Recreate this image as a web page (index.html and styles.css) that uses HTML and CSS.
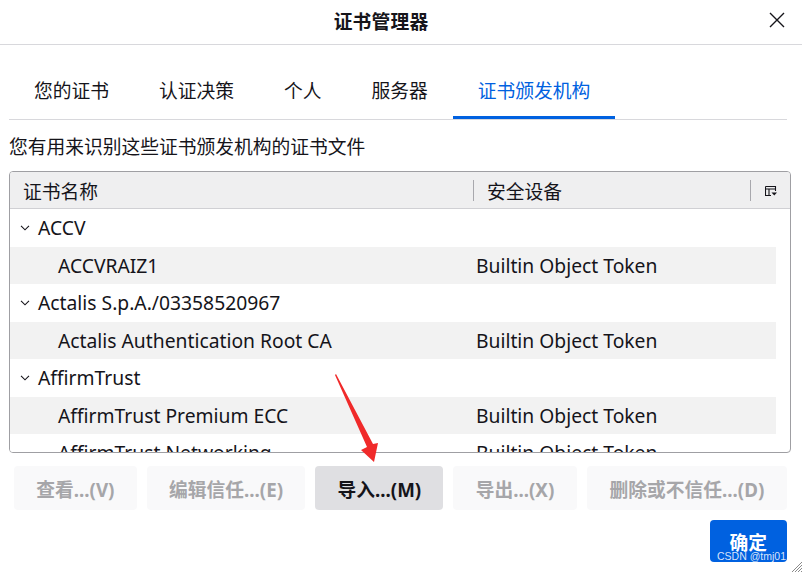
FILE: index.html
```html
<!DOCTYPE html>
<html lang="zh-CN">
<head>
<meta charset="utf-8">
<title>证书管理器</title>
<link rel="stylesheet" href="styles.css">
</head>
<body>
<div class="dialog">
  <header class="titlebar">
    <h1 class="title">证书管理器</h1>
    <button class="close" aria-label="关闭">
      <svg width="16" height="16" viewBox="0 0 16 16"><path d="M1 1 L15 15 M15 1 L1 15" stroke="#15141a" stroke-width="1.4" fill="none"/></svg>
    </button>
  </header>

  <nav class="tabs">
    <div class="tab">您的证书</div>
    <div class="tab">认证决策</div>
    <div class="tab">个人</div>
    <div class="tab">服务器</div>
    <div class="tab active">证书颁发机构</div>
  </nav>

  <p class="desc">您有用来识别这些证书颁发机构的证书文件</p>

  <div class="tree">
    <div class="tree-head">
      <div class="hcell c1">证书名称</div>
      <div class="hsep"></div>
      <div class="hcell c2">安全设备</div>
      <div class="hsep"></div>
      <div class="picker">
        <svg width="12" height="12" viewBox="0 0 12 12">
          <path d="M0.5 1.5 H10.5 V6 M0.5 1.5 V10.5 H6 M0.5 4 H10.5 M4 4 V10.5" stroke="#15141a" stroke-width="1.1" fill="none"/>
          <path d="M6.5 7.5 H12 L9.25 10.5 Z" fill="#15141a"/>
        </svg>
      </div>
    </div>
    <div class="tree-body">
      <div class="row group"><span class="twisty"><svg width="10" height="6" viewBox="0 0 10 6"><path d="M1 0.8 L5 4.8 L9 0.8" stroke="#15141a" stroke-width="1.1" fill="none"/></svg></span><span class="name">ACCV</span></div>
      <div class="row child"><span class="name">ACCVRAIZ1</span><span class="dev">Builtin Object Token</span></div>
      <div class="row group"><span class="twisty"><svg width="10" height="6" viewBox="0 0 10 6"><path d="M1 0.8 L5 4.8 L9 0.8" stroke="#15141a" stroke-width="1.1" fill="none"/></svg></span><span class="name">Actalis S.p.A./03358520967</span></div>
      <div class="row child"><span class="name">Actalis Authentication Root CA</span><span class="dev">Builtin Object Token</span></div>
      <div class="row group"><span class="twisty"><svg width="10" height="6" viewBox="0 0 10 6"><path d="M1 0.8 L5 4.8 L9 0.8" stroke="#15141a" stroke-width="1.1" fill="none"/></svg></span><span class="name">AffirmTrust</span></div>
      <div class="row child"><span class="name">AffirmTrust Premium ECC</span><span class="dev">Builtin Object Token</span></div>
      <div class="row child plain"><span class="name">AffirmTrust Networking</span><span class="dev">Builtin Object Token</span></div>
    </div>
  </div>

  <div class="actions">
    <button class="btn disabled">查看...(V)</button>
    <button class="btn disabled">编辑信任...(E)</button>
    <button class="btn normal">导入...(M)</button>
    <button class="btn disabled">导出...(X)</button>
    <button class="btn disabled wide">删除或不信任...(D)</button>
  </div>

  <div class="footer">
    <button class="btn primary">确定</button>
  </div>

  <svg class="arrow" width="802" height="572" viewBox="0 0 802 572">
    <polygon points="336,374 373,444 378,443 374,462 361,450 367,447 335,375" fill="#f02a2a"/>
  </svg>
  <div class="watermark">CSDN @tmj01</div>
  <svg class="grip" width="12" height="12" viewBox="0 0 12 12">
    <path d="M12 2 L2 12 M12 5 L5 12 M12 8 L8 12 M12 11 L11 12" stroke="#8a8a8a" stroke-width="1" fill="none"/>
  </svg>
</div>
</body>
</html>
```

FILE: styles.css
```css
* { box-sizing: border-box; }
html, body {
  margin: 0;
  padding: 0;
  background: #ffffff;
}
body {
  width: 802px;
  height: 572px;
  overflow: hidden;
  font-family: "Noto Sans", "Noto Sans CJK SC", sans-serif;
  font-size: 18.75px;
  color: #15141a;
}
.dialog {
  position: relative;
  width: 802px;
  height: 572px;
}
.titlebar {
  height: 45px;
  border-bottom: 1px solid #d8d8dc;
  display: flex;
  align-items: center;
  justify-content: center;
  padding-right: 40px;
  position: relative;
}
.title {
  margin: 0;
  font-size: 18.75px;
  font-weight: 700;
  line-height: 24px;
  letter-spacing: 0.2px;
}
.close {
  position: absolute;
  right: 17px;
  top: 12px;
  width: 16px;
  height: 16px;
  padding: 0;
  border: 0;
  background: none;
  display: block;
}
.close svg { display: block; }
.tabs {
  display: flex;
  margin: 21px 15px 0 9px;
  border-bottom: 1px solid #d8d8dc;
}
.tab {
  padding: 0 25px;
  height: 53px;
  line-height: 50px;
  border-bottom: 3px solid transparent;
  white-space: nowrap;
}
.tab.active {
  color: #0061e0;
  border-bottom-color: #0061e0;
}
.desc {
  margin: 15px 0 0 9px;
  line-height: 24px;
}
.tree {
  margin: 12px 0 0 9px;
  width: 782px;
  height: 282px;
  border: 1px solid #9f9fa3;
  border-radius: 4px;
  overflow: hidden;
}
.tree-head {
  display: flex;
  align-items: center;
  height: 37px;
  background: #efeff0;
  border-bottom: 1px solid #d0d0d4;
}
.hcell {
  white-space: nowrap;
}
.hcell.c1 {
  width: 463px;
  padding-left: 13px;
}
.hcell.c2 {
  width: 276px;
  padding-left: 13px;
}
.hsep {
  width: 1px;
  height: 21px;
  background: #a8a8ad;
}
.picker {
  flex: 1;
  display: flex;
  justify-content: center;
  padding-top: 2px;
}
.picker svg { display: block; }
.tree-body {
  width: 766px;
  font-size: 19.3px;
}
.row {
  height: 37.5px;
  display: flex;
  align-items: center;
  white-space: nowrap;
}
.row.child {
  background: #f2f2f2;
}
.row.child.plain {
  background: #ffffff;
}
.twisty {
  width: 28px;
  padding-left: 10px;
  display: flex;
  align-items: center;
}
.twisty svg { display: block; }
.row.group .name { width: 435px; }
.row.child .name {
  width: 466px;
  padding-left: 48px;
}
.actions {
  display: flex;
  gap: 10px;
  margin: 13px 0 0 14px;
}
.btn {
  height: 44px;
  padding: 0 22.25px;
  border: 0;
  border-radius: 4px;
  font-family: "Noto Sans", "Noto Sans CJK SC", sans-serif;
  font-size: 18.75px;
  font-weight: 700;
  white-space: nowrap;
}
.btn.wide {
  padding: 0 23px;
}
.btn.disabled {
  background: #f9f9fa;
  color: #a6a6a9;
}
.btn.normal {
  background: #dfdfe2;
  color: #15141a;
}
.btn.primary {
  background: #0061e0;
  color: #ffffff;
  height: 42px;
  padding: 0 20px;
}
.footer {
  display: flex;
  justify-content: flex-end;
  margin: 10px 15px 0 0;
}
.arrow {
  position: absolute;
  left: 0;
  top: 0;
  pointer-events: none;
}
.watermark {
  position: absolute;
  left: 717px;
  top: 550px;
  font-family: "Liberation Sans", sans-serif;
  font-size: 10.5px;
  line-height: 13px;
  color: rgba(255,255,255,0.85);
  white-space: nowrap;
}
.grip {
  position: absolute;
  right: 0;
  bottom: 0;
}
```
